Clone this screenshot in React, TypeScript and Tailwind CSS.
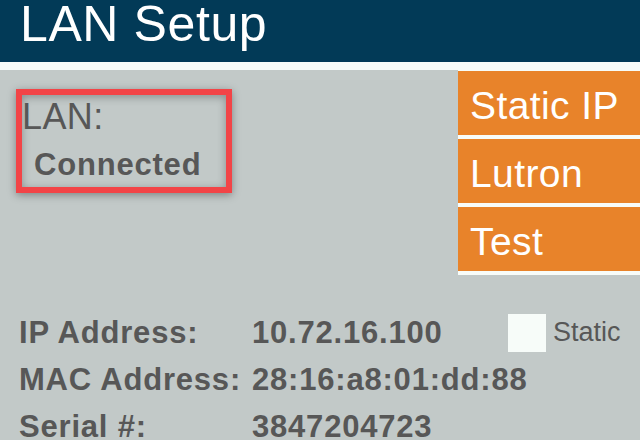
const rows = [
  { label: "IP Address:", value: "10.72.16.100", toggle: true },
  { label: "MAC Address:", value: "28:16:a8:01:dd:88", toggle: false },
  { label: "Serial #:", value: "3847204723", toggle: false },
];

const menu = ["Static IP", "Lutron", "Test"];

const App = () => {
  return (
    <div
      className="w-[640px] h-[440px] overflow-hidden bg-[#c2c9c8] text-[#575757]"
      style={{ fontFamily: '"Liberation Sans", Arial, sans-serif' }}
    >
      {/* Title bar */}
      <header className="h-[62px] bg-[#023a57] pl-5">
        <h1 className="text-[50px] leading-[48px] tracking-[0.6px] text-white font-normal">LAN Setup</h1>
      </header>
      <div className="h-2 bg-[#f7fcf9]" />

      <div className="flex justify-between">
        {/* Status box */}
        <div className="ml-4 mt-[19px] w-[216px] h-[104px] border-[6px] border-[#f24447] shadow-[0_2px_8px_rgba(0,0,0,0.35),inset_0_2px_8px_rgba(0,0,0,0.3)]">
          <div className="pt-1 text-[36px] leading-[36px] tracking-[0.4px]">LAN:</div>
          <div className="mt-[14px] pl-3 text-[31px] leading-[31px] tracking-[0.8px] font-bold">Connected</div>
        </div>

        {/* Side menu */}
        <nav className="w-[182px] bg-[#f7fcf9] pt-px pb-1 flex flex-col gap-1">
          {menu.map((item) => (
            <button
              key={item}
              className="h-16 bg-[#e8832a] pl-3 pt-[5px] text-left text-white text-[39px] leading-[59px] tracking-[0.4px]"
            >
              {item}
            </button>
          ))}
        </nav>
      </div>

      {/* Network details */}
      <div className="mt-[34px] pl-[19px]">
        {rows.map((row) => (
          <div key={row.label} className="flex items-center h-[47px] text-[31px] leading-[47px] tracking-[0.8px] font-bold">
            <span className="w-[233px]">{row.label}</span>
            <span className="w-[256px]">{row.value}</span>
            {row.toggle && (
              <div className="flex items-center gap-[7px]">
                <span className="w-[38px] h-[38px] bg-[#f7fcf9]" />
                <span className="text-[27px] leading-normal tracking-normal font-normal">Static</span>
              </div>
            )}
          </div>
        ))}
      </div>
    </div>
  );
};

export default App;
